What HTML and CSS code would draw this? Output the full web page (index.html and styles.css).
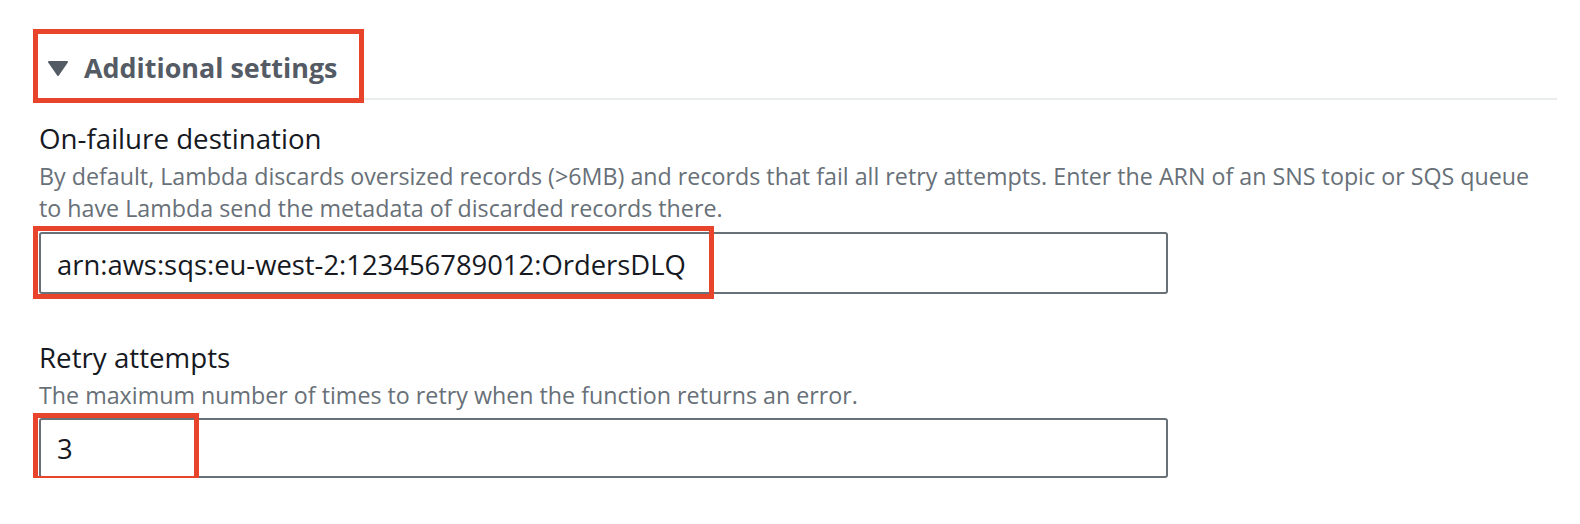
FILE: index.html
```html
<!DOCTYPE html>
<html lang="en">
<head>
<meta charset="utf-8">
<title>Additional settings</title>
<link rel="stylesheet" href="styles.css">
</head>
<body>
<section class="panel">
  <div class="header">
    <svg class="caret" width="20" height="15" viewBox="0 0 20 15" aria-hidden="true">
      <polygon points="1,1 19,1 10,14" fill="#545b64" stroke="#545b64" stroke-width="2" stroke-linejoin="round"/>
    </svg>
    <h2 class="title">Additional settings</h2>
    <span class="mark mark-header"></span>
  </div>

  <div class="field field-first">
    <label class="label" for="dest">On-failure destination</label>
    <p class="desc">By default, Lambda discards oversized records (&gt;6MB) and records that fail all retry attempts. Enter the ARN of an SNS topic or SQS queue to have Lambda send the metadata of discarded records there.</p>
    <div class="control">
      <input id="dest" class="input" type="text" value="arn:aws:sqs:eu-west-2:123456789012:OrdersDLQ">
      <span class="mark mark-arn"></span>
    </div>
  </div>

  <div class="field field-second">
    <label class="label" for="retry">Retry attempts</label>
    <p class="desc">The maximum number of times to retry when the function returns an error.</p>
    <div class="control">
      <input id="retry" class="input" type="text" value="3">
      <span class="mark mark-retry"></span>
    </div>
  </div>
</section>
</body>
</html>
```

FILE: styles.css
```css
* { box-sizing: border-box; }

html, body {
  margin: 0;
  background: #ffffff;
}

body {
  font-family: "Open Sans", "Liberation Sans", Arial, sans-serif;
  color: #16191f;
}

.panel {
  padding: 38px 0 0 39px;
}

.header {
  position: relative;
  display: flex;
  align-items: center;
  height: 62px;
  margin-right: 23px;
  border-bottom: 2px solid #eaeded;
}

.caret {
  display: block;
  margin-left: 9px;
  margin-right: 16px;
  flex: none;
}

.title {
  margin: 0;
  font-size: 26.9px;
  font-weight: 700;
  color: #545b64;
  line-height: 36px;
}

.mark {
  position: absolute;
  border: 5px solid #e8432b;
  pointer-events: none;
}

.mark-header {
  left: -6px;
  top: -9px;
  width: 331px;
  height: 74px;
}

.field-first { margin-top: 20px; }
.field-second { margin-top: 45px; }

.label {
  display: block;
  font-size: 27.7px;
  line-height: 36px;
  color: #16191f;
}

.desc {
  max-width: 1505px;
  margin: 4px 0 0;
  font-size: 23.25px;
  line-height: 32px;
  color: #687078;
}

.control {
  position: relative;
  margin-top: 8px;
  width: 1129px;
}

.input {
  display: block;
  width: 100%;
  height: 62px;
  margin: 0;
  padding: 3px 16px 0;
  border: 2px solid #687078;
  border-radius: 3px;
  background: #ffffff;
  font-family: "Open Sans", "Liberation Sans", Arial, sans-serif;
  font-size: 27.4px;
  color: #16191f;
  outline: none;
}

.field-second .control { margin-top: 7px; }
.field-second .input { height: 60px; padding-top: 0; }

.mark-arn {
  left: -6px;
  top: -6px;
  width: 681px;
  height: 73px;
}

.mark-retry {
  left: -6px;
  top: -5px;
  width: 166px;
  height: 68px;
}
```
